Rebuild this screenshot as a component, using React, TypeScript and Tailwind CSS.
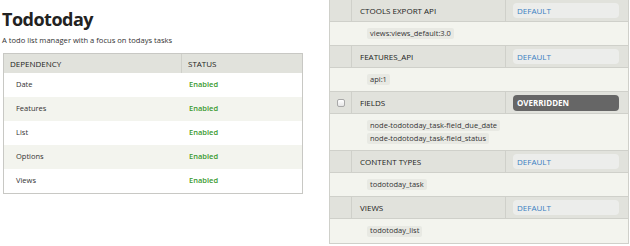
import React from 'react'

const font = { fontFamily: '"Open Sans", "Noto Sans", "Liberation Sans", sans-serif' }

const deps = ['Date', 'Features', 'List', 'Options', 'Views']

type Component = {
  name: string
  state: 'default' | 'overridden'
  items: string[]
  checkbox?: boolean
}

const components: Component[] = [
  { name: 'CTOOLS EXPORT API', state: 'default', items: ['views:views_default:3.0'] },
  { name: 'FEATURES_API', state: 'default', items: ['api:1'] },
  {
    name: 'FIELDS',
    state: 'overridden',
    checkbox: true,
    items: ['node-todotoday_task-field_due_date', 'node-todotoday_task-field_status'],
  },
  { name: 'CONTENT TYPES', state: 'default', items: ['todotoday_task'] },
  { name: 'VIEWS', state: 'default', items: ['todotoday_list'] },
]

const ComponentRows: React.FC<{ c: Component; last: boolean }> = ({ c, last }) => (
  <>
    <div className="flex h-[22px] bg-[#e1e2dc] border-b border-[#cfd0ca]">
      <div className="w-[22px] flex items-center justify-center border-r border-[#cfd0ca]">
        {c.checkbox && (
          <span className="block w-[8px] h-[8px] rounded-[2px] border border-[#a8a8a8] bg-gradient-to-b from-white to-[#e6e6e6]" />
        )}
      </div>
      <div className="w-[154px] flex items-center pl-[8px] text-[8px] text-[#222] border-r border-[#cfd0ca]">
        {c.name}
      </div>
      <div className="flex-1 flex items-center pl-[7px] pr-[9px]">
        {c.state === 'default' ? (
          <span className="w-full h-[15px] rounded-[4px] bg-[#ecedeb] text-[#3a7ec2] text-[8px] flex items-center pl-[4px]">
            DEFAULT
          </span>
        ) : (
          <span className="w-full h-[16px] rounded-[4px] bg-[#666666] text-white font-bold text-[8px] flex items-center pl-[4px]">
            OVERRIDDEN
          </span>
        )}
      </div>
    </div>
    <div
      className={`flex flex-col justify-center gap-[2px] pl-[37px] bg-[#f3f4ee] ${
        c.items.length > 1 ? 'h-[37px]' : 'h-[24px]'
      } ${last ? '' : 'border-b border-[#cfd0ca]'}`}
    >
      {c.items.map((it) => (
        <span key={it} className="self-start px-[3px] h-[11px] flex items-center rounded-[2px] bg-[#e8e9e3] text-[7.5px] text-[#333]">
          {it}
        </span>
      ))}
    </div>
  </>
)

export default function App() {
  return (
    <div style={font} className="w-[630px] h-[246px] bg-white flex overflow-hidden">
      <div className="w-[329px] pl-[3px] pt-[7px]">
        <h1 className="text-[18px] leading-[24px] font-bold tracking-[-0.5px] text-[#222] -ml-[1px]">Todotoday</h1>
        <p className="text-[7.6px] leading-[12px] text-[#333] mt-[3px] -ml-[1px]">
          A todo list manager with a focus on todays tasks
        </p>
        <div className="mt-[7px] w-[300px] border border-[#c8c8c4]">
          <div className="flex h-[19px] bg-[#e1e2dc] text-[8px] text-[#222]">
            <div className="w-[178px] pl-[6px] flex items-center border-r border-[#cfd0ca]">DEPENDENCY</div>
            <div className="flex-1 pl-[6px] flex items-center">STATUS</div>
          </div>
          {deps.map((d, i) => (
            <div key={d} className={`flex h-[24px] text-[7.5px] ${i % 2 ? 'bg-[#f3f4ee]' : 'bg-white'}`}>
              <div className="w-[178px] pl-[12px] flex items-center text-[#333]">{d}</div>
              <div className="flex-1 pl-[7px] flex items-center text-[#3a9a2e] font-semibold">Enabled</div>
            </div>
          ))}
        </div>
      </div>
      <div className="w-[300px] h-[244px] border-x border-b border-[#cfd0ca] flex flex-col">
        {components.map((c, i) => (
          <ComponentRows key={c.name} c={c} last={i === components.length - 1} />
        ))}
      </div>
    </div>
  )
}
